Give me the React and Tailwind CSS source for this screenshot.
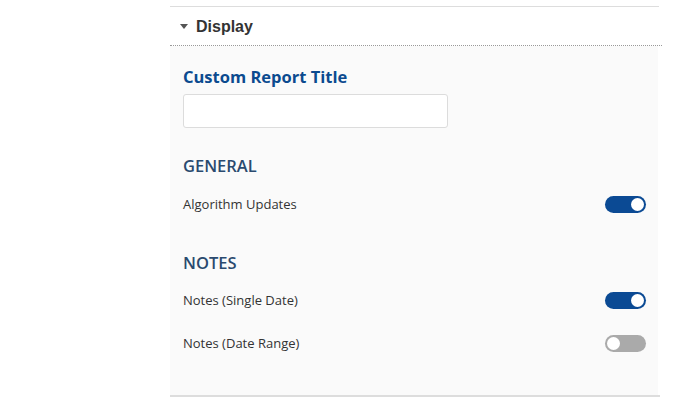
export default function App() {
  const Toggle = ({ on }) => (
    <div
      className={`w-[41px] h-[17px] rounded-full flex items-center px-[2px] ${
        on ? "bg-[#0b4a94] justify-end" : "bg-[#aaaaaa] justify-start"
      }`}
    >
      <div className="w-[13px] h-[13px] rounded-full bg-white" />
    </div>
  );
  const Row = ({ label, on }) => (
    <div className="flex items-center justify-between h-[17px] pr-[12px]">
      <span className="text-[13px] text-[#333] font-['Open_Sans',sans-serif]">{label}</span>
      <Toggle on={on} />
    </div>
  );
  return (
    <div className="w-[684px] h-[399px] bg-white">
      <div className="pt-[6px] ml-[170px] w-[490px]">
        <div className="border-t border-[#dddddd] w-[489px]" />
        <div className="h-[39px] flex items-center pl-[10px] border-b border-dotted border-[#999] w-[492px]">
          <span className="w-0 h-0 border-l-[4px] border-r-[4px] border-t-[5px] border-l-transparent border-r-transparent border-t-[#555] mr-[8px] mt-[1px]" />
          <span className="font-['Liberation_Sans',sans-serif] font-bold text-[16px] text-[#333] mt-[1px]">Display</span>
        </div>
        <div className="bg-[#fafafa] w-[488px] h-[349px] pl-[13px] pt-[20px] font-['Open_Sans',sans-serif]">
          <div className="text-[16.5px] font-bold text-[#0b4a8f] leading-[22px]">Custom Report Title</div>
          <input className="block mt-[6px] w-[265px] h-[34px] bg-white border border-[#dcdcdc] rounded-[3px]" />
          <div className="mt-[27px] text-[16.5px] font-semibold text-[#2a4a6f] leading-[22px]">GENERAL</div>
          <div className="mt-[19px]"><Row label="Algorithm Updates" on /></div>
          <div className="mt-[39px] text-[16.5px] font-semibold text-[#2a4a6f] leading-[22px]">NOTES</div>
          <div className="mt-[18px]"><Row label="Notes (Single Date)" on /></div>
          <div className="mt-[26px]"><Row label="Notes (Date Range)" on={false} /></div>
        </div>
        <div className="border-t-2 border-[#dddddd] w-[490px]" />
      </div>
    </div>
  );
}
